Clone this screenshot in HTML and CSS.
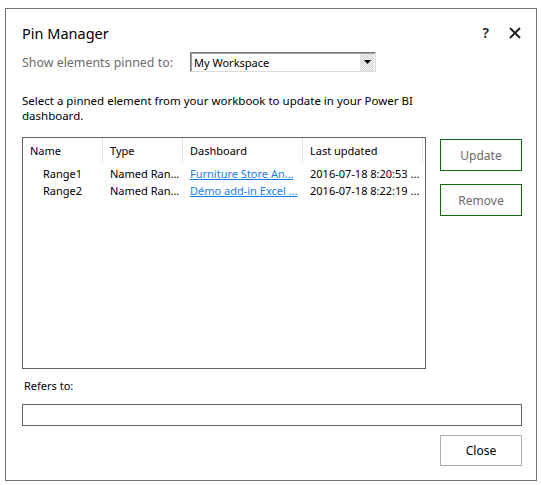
FILE: index.html
```html
<!DOCTYPE html>
<html>
<head>
<meta charset="utf-8">
<link rel="stylesheet" href="styles.css">
</head>
<body>
<div class="dialog">
  <div class="titlebar">
    <div class="title">Pin Manager</div>
    <div class="title-actions">
      <span class="help">?</span>
      <svg class="close-x" width="12" height="12" viewBox="0 0 12 12"><path d="M1 1 L11 11 M11 1 L1 11" stroke="#222" stroke-width="2" fill="none"/></svg>
    </div>
  </div>
  <div class="filter-row">
    <span class="filter-label">Show elements pinned to:</span>
    <div class="select">
      <span class="select-value">My Workspace</span>
      <span class="select-btn"><svg width="7" height="4" viewBox="0 0 7 4"><path d="M0 0 H7 L3.5 4 Z" fill="#000"/></svg></span>
    </div>
  </div>
  <p class="intro">Select a pinned element from your workbook to update in your Power BI dashboard.</p>
  <div class="main">
    <div class="list">
      <div class="list-header">
        <div class="col c1">Name</div>
        <div class="col c2">Type</div>
        <div class="col c3">Dashboard</div>
        <div class="col c4">Last updated</div>
      </div>
      <div class="list-row">
        <div class="cell c1 name">Range1</div>
        <div class="cell c2">Named Ran...</div>
        <div class="cell c3"><span class="link">Furniture Store An...</span></div>
        <div class="cell c4">2016-07-18 8:20:53 ...</div>
      </div>
      <div class="list-row">
        <div class="cell c1 name">Range2</div>
        <div class="cell c2">Named Ran...</div>
        <div class="cell c3"><span class="link">Démo add-in Excel ...</span></div>
        <div class="cell c4">2016-07-18 8:22:19 ...</div>
      </div>
    </div>
    <div class="side-buttons">
      <button class="btn green">Update</button>
      <button class="btn green">Remove</button>
    </div>
  </div>
  <div class="refers-label">Refers to:</div>
  <div class="refers-input"></div>
  <div class="footer">
    <button class="btn plain">Close</button>
  </div>
</div>
</body>
</html>
```
FILE: styles.css
```css
html, body {
  margin: 0;
  padding: 0;
  background: #ffffff;
}
body {
  font-family: "Noto Sans", "Open Sans", sans-serif;
  font-size: 11.5px;
  color: #000;
}
.dialog {
  box-sizing: border-box;
  margin: 8px 0 0 5px;
  width: 532px;
  height: 473px;
  border: 1px solid #707070;
  padding: 0 14px 0 16px;
  display: flex;
  flex-direction: column;
}
.titlebar {
  margin-top: 13px;
  height: 22px;
  display: flex;
  justify-content: space-between;
  align-items: center;
}
.title {
  font-size: 14.5px;
  line-height: 22px;
  color: #000;
}
.title-actions {
  display: flex;
  align-items: center;
  gap: 20px;
  margin-right: 1px;
}
.help {
  font-size: 14px;
  font-weight: 600;
  color: #222;
  line-height: 14px;
}
.close-x {
  display: block;
}
.filter-row {
  margin-top: 8px;
  height: 20px;
  display: flex;
  align-items: center;
}
.filter-label {
  color: #6d6d6d;
  width: 168px;
  font-size: 12.4px;
  white-space: nowrap;
}
.select {
  box-sizing: border-box;
  width: 186px;
  height: 20px;
  border: 1px solid;
  border-color: #7a7a7a #dcdcdc #dcdcdc #7a7a7a;
  box-shadow: inset 1px 1px 0 #a0a0a0;
  display: flex;
  align-items: center;
  justify-content: space-between;
  padding-left: 3px;
}
.select-value {
  font-size: 11px;
}
.select-btn {
  width: 14px;
  height: 17px;
  margin-right: 1px;
  background-color: #e8e8e8;
  background-image: repeating-conic-gradient(#d4d4d4 0 25%, #f4f4f4 0 50%);
  background-size: 2px 2px;
  display: flex;
  align-items: center;
  justify-content: center;
}
.select-btn svg { display: block; }
.intro {
  margin: 21px 0 0 0;
  width: 420px;
  line-height: 15px;
  font-size: 11.5px;
}
.main {
  margin-top: 14px;
  display: flex;
  gap: 14px;
  align-items: flex-start;
}
.list {
  box-sizing: border-box;
  width: 404px;
  height: 232px;
  border: 1px solid #646464;
}
.list-header {
  display: flex;
  height: 25px;
}
.col {
  box-sizing: border-box;
  border-right: 1px solid #e5e5e5;
  padding-left: 7px;
  line-height: 25px;
  font-size: 11px;
  white-space: nowrap;
  overflow: hidden;
}
.c1 { width: 80px; }
.c2 { width: 80px; }
.c3 { width: 120px; }
.c4 { width: 120px; }
.list-header + .list-row { margin-top: 2px; }
.list-row {
  display: flex;
  height: 17px;
}
.cell {
  box-sizing: border-box;
  padding-left: 7px;
  line-height: 17px;
  font-size: 11px;
  white-space: nowrap;
  overflow: hidden;
}
.cell.name { padding-left: 20px; }
.link {
  color: #1a7ee8;
  text-decoration: underline;
}
.side-buttons {
  display: flex;
  flex-direction: column;
  gap: 13px;
  margin-top: 2px;
}
.btn {
  box-sizing: border-box;
  width: 82px;
  height: 32px;
  background: #fff;
  font-family: "Noto Sans", "Open Sans", sans-serif;
  font-size: 12px;
  padding: 0;
  margin: 0;
}
.btn.green {
  border: 1px solid #116b11;
  color: #6a6a6a;
}
.btn.plain {
  border: 1px solid #adadad;
  color: #000;
  height: 31px;
}
.refers-label {
  margin-top: 9px;
  padding-left: 2px;
  line-height: 15px;
  font-size: 11px;
}
.refers-input {
  box-sizing: border-box;
  margin-top: 11px;
  width: 500px;
  height: 22px;
  border: 1px solid #646464;
}
.footer {
  margin-top: 9px;
  display: flex;
  justify-content: flex-end;
}
```
